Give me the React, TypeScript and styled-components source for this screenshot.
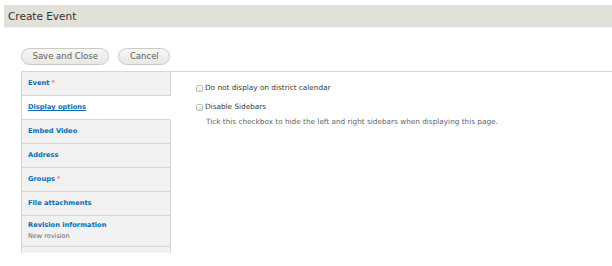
import React from "react";
import styled, { createGlobalStyle } from "styled-components";

const Global = createGlobalStyle`
  html, body { margin: 0; padding: 0; background: #fff; }
  body { font-family: "DejaVu Sans", "Liberation Sans", sans-serif; color: #333; }
  * { box-sizing: border-box; }
`;

const Page = styled.div`
  width: 612px;
  height: 266px;
  overflow: hidden;
  padding-top: 5px;
`;

const Header = styled.header`
  margin-left: 4px;
  height: 23px;
  background: #e1e1da;
  border-bottom: 1px solid #eeeeea;
  padding-left: 4px;
  display: flex;
  align-items: center;
`;

const Title = styled.h1`
  margin: 0;
  font-size: 10.5px;
  font-weight: normal;
  color: #333;
  line-height: 22px;
`;

const Body = styled.div`
  padding-left: 21px;
`;

const Actions = styled.div`
  display: flex;
  gap: 9px;
  margin-top: 20px;
`;

const Button = styled.button`
  height: 17px;
  padding: 0 10.5px;
  border: 1px solid #c9c9c6;
  border-radius: 10px;
  background: linear-gradient(#f7f7f6, #e7e7e3);
  color: #626262;
  font-family: "DejaVu Sans", sans-serif;
  font-size: 8.5px;
  line-height: 15px;
  cursor: pointer;
`;

const Tabs = styled.div`
  display: flex;
  margin-top: 6px;
  border-top: 1px solid #d6d6d6;
`;

const TabList = styled.ul`
  list-style: none;
  margin: 0;
  padding: 0;
  width: 150px;
  flex: none;
  border-left: 1px solid #d6d6d6;
`;

const Tab = styled.li<{ $selected?: boolean; $tall?: boolean }>`
  height: ${(p) => (p.$tall ? 31 : 24)}px;
  border-bottom: 1px solid #d6d6d6;
  border-right: 1px solid ${(p) => (p.$selected ? "#fff" : "#d6d6d6")};
  background: ${(p) => (p.$selected ? "#fff" : "#f1f1f1")};
  padding-left: 6px;
  display: flex;
  flex-direction: column;
  justify-content: center;
`;

const TabEnd = styled.li`
  height: 6px;
  background: #f1f1f1;
  border-right: 1px solid #d6d6d6;
`;

const TabLink = styled.a<{ $selected?: boolean }>`
  font-size: 6.7px;
  font-weight: bold;
  color: #0a6db3;
  line-height: 9px;
  text-decoration: ${(p) => (p.$selected ? "underline" : "none")};
  cursor: pointer;
`;

const Req = styled.span`
  color: #e5484d;
  font-weight: normal;
  margin-left: 2px;
`;

const TabSummary = styled.div`
  font-size: 6.5px;
  color: #666;
  line-height: 9px;
  margin-top: 2px;
`;

const Panel = styled.div`
  flex: 1;
  padding: 11px 0 0 25px;
`;

const CheckRow = styled.label<{ $gap?: number }>`
  display: flex;
  align-items: center;
  gap: 2px;
  height: 9px;
  margin-bottom: ${(p) => p.$gap ?? 0}px;
  font-size: 7.3px;
  color: #3a3a3a;
  line-height: 9px;
`;

const Box = styled.span`
  width: 7px;
  height: 7px;
  flex: none;
  margin-top: 1px;
  border: 1px solid #bdbdbd;
  border-radius: 1.5px;
  background: linear-gradient(#fdfdfd, #e4e4e4);
`;

const Description = styled.div`
  margin: 5.5px 0 0 10px;
  font-size: 7.3px;
  color: #666;
  line-height: 9px;
`;

const tabs = [
  { label: "Event", required: true },
  { label: "Display options", selected: true },
  { label: "Embed Video" },
  { label: "Address" },
  { label: "Groups", required: true },
  { label: "File attachments" },
  { label: "Revision information", summary: "New revision" },
];

export default function App() {
  return (
    <Page>
      <Global />
      <Header>
        <Title>Create Event</Title>
      </Header>
      <Body>
        <Actions>
          <Button>Save and Close</Button>
          <Button>Cancel</Button>
        </Actions>
        <Tabs>
          <TabList>
            {tabs.map((t) => (
              <Tab key={t.label} $selected={t.selected} $tall={!!t.summary}>
                <TabLink $selected={t.selected}>
                  {t.label}
                  {t.required && <Req>*</Req>}
                </TabLink>
                {t.summary && <TabSummary>{t.summary}</TabSummary>}
              </Tab>
            ))}
            <TabEnd />
          </TabList>
          <Panel>
            <CheckRow $gap={10}>
              <Box />
              Do not display on district calendar
            </CheckRow>
            <CheckRow>
              <Box />
              Disable Sidebars
            </CheckRow>
            <Description>
              Tick this checkbox to hide the left and right sidebars when displaying this page.
            </Description>
          </Panel>
        </Tabs>
      </Body>
    </Page>
  );
}
